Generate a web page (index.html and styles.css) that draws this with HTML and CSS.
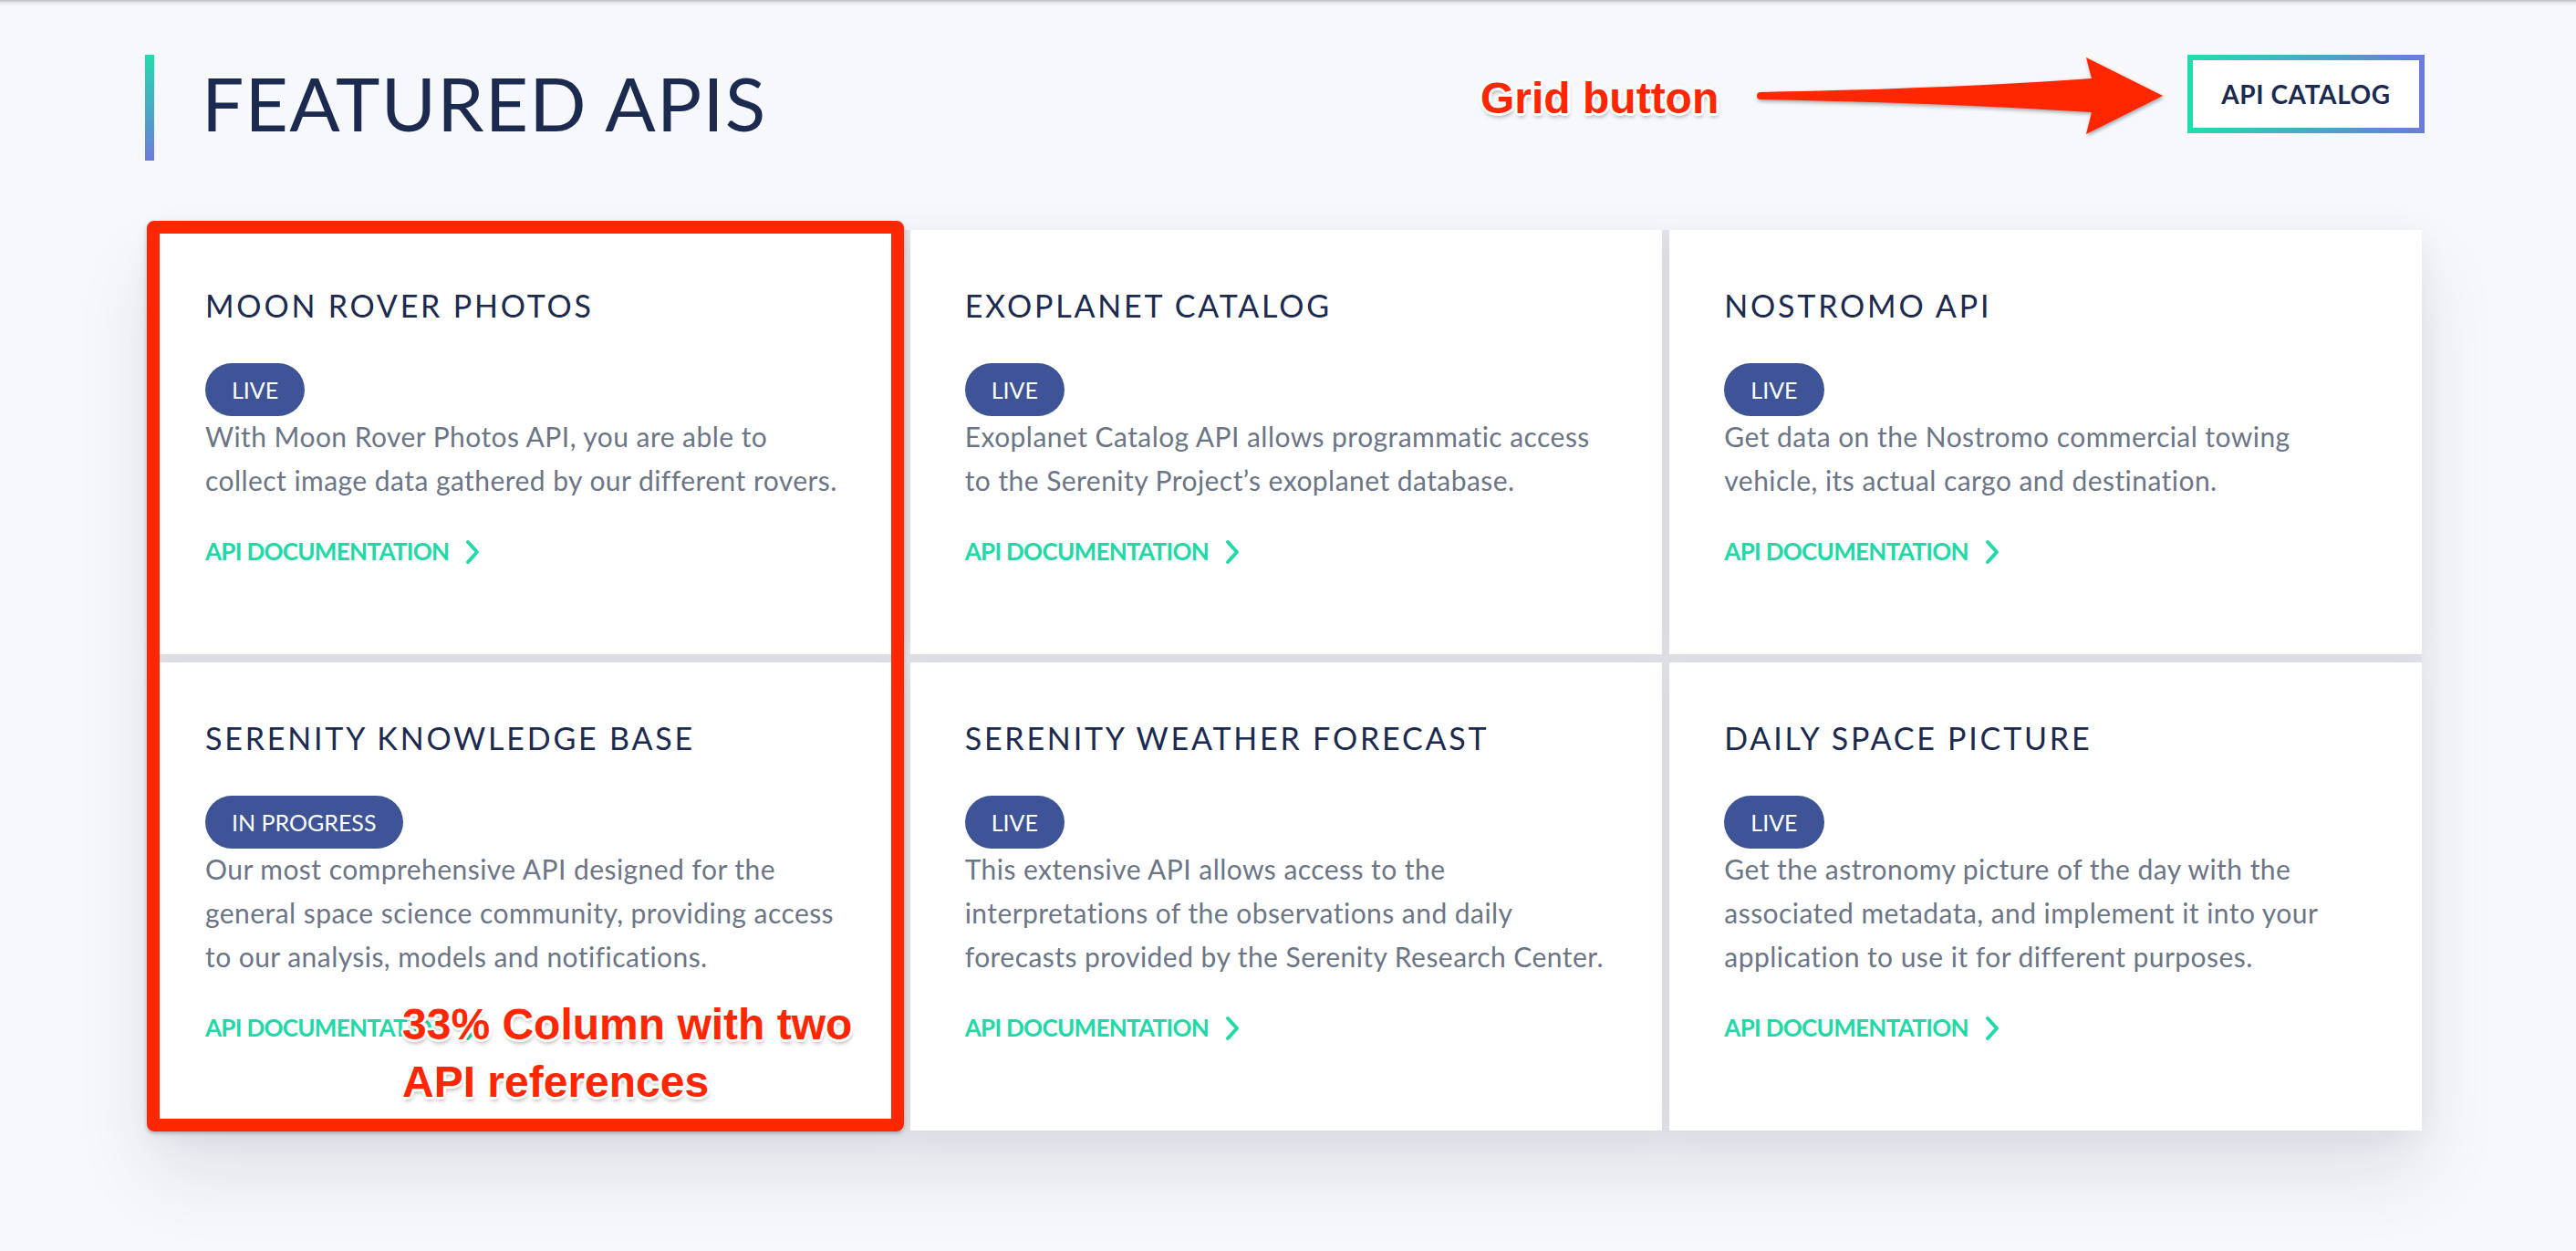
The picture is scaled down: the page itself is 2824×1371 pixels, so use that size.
FILE: index.html
```html
<!DOCTYPE html>
<html lang="en">
<head>
<meta charset="utf-8">
<title>Featured APIs</title>
<link rel="stylesheet" href="styles.css">
</head>
<body>
<div class="page">
  <header class="header">
    <div class="title-wrap">
      <span class="accent"></span>
      <h1 class="title">FEATURED APIS</h1>
    </div>
    <a class="catalog-btn" href="#">API CATALOG</a>
  </header>

  <section class="grid">
    <article class="card">
      <h2 class="card-title">MOON ROVER PHOTOS</h2>
      <span class="badge">LIVE</span>
      <p class="desc">With Moon Rover Photos API, you are able to<br>collect image data gathered by our different rovers.</p>
      <a class="doc-link" href="#">API DOCUMENTATION<svg class="chev" viewBox="0 0 18 28" width="18" height="28"><path d="M4 3 L14 14 L4 25"/></svg></a>
    </article>
    <article class="card">
      <h2 class="card-title">EXOPLANET CATALOG</h2>
      <span class="badge">LIVE</span>
      <p class="desc">Exoplanet Catalog API allows programmatic access<br>to the Serenity Project’s exoplanet database.</p>
      <a class="doc-link" href="#">API DOCUMENTATION<svg class="chev" viewBox="0 0 18 28" width="18" height="28"><path d="M4 3 L14 14 L4 25"/></svg></a>
    </article>
    <article class="card">
      <h2 class="card-title">NOSTROMO API</h2>
      <span class="badge">LIVE</span>
      <p class="desc">Get data on the Nostromo commercial towing<br>vehicle, its actual cargo and destination.</p>
      <a class="doc-link" href="#">API DOCUMENTATION<svg class="chev" viewBox="0 0 18 28" width="18" height="28"><path d="M4 3 L14 14 L4 25"/></svg></a>
    </article>
    <article class="card">
      <h2 class="card-title">SERENITY KNOWLEDGE BASE</h2>
      <span class="badge">IN PROGRESS</span>
      <p class="desc">Our most comprehensive API designed for the<br>general space science community, providing access<br>to our analysis, models and notifications.</p>
      <a class="doc-link" href="#">API DOCUMENTATION<svg class="chev" viewBox="0 0 18 28" width="18" height="28"><path d="M4 3 L14 14 L4 25"/></svg></a>
    </article>
    <article class="card">
      <h2 class="card-title">SERENITY WEATHER FORECAST</h2>
      <span class="badge">LIVE</span>
      <p class="desc">This extensive API allows access to the<br>interpretations of the observations and daily<br>forecasts provided by the Serenity Research Center.</p>
      <a class="doc-link" href="#">API DOCUMENTATION<svg class="chev" viewBox="0 0 18 28" width="18" height="28"><path d="M4 3 L14 14 L4 25"/></svg></a>
    </article>
    <article class="card">
      <h2 class="card-title">DAILY SPACE PICTURE</h2>
      <span class="badge">LIVE</span>
      <p class="desc">Get the astronomy picture of the day with the<br>associated metadata, and implement it into your<br>application to use it for different purposes.</p>
      <a class="doc-link" href="#">API DOCUMENTATION<svg class="chev" viewBox="0 0 18 28" width="18" height="28"><path d="M4 3 L14 14 L4 25"/></svg></a>
    </article>
  </section>
</div>

<!-- annotations -->
<div class="note note-grid">Grid button</div>
<svg class="note-arrow" viewBox="0 0 500 130" width="500" height="130">
  <path d="M30 61 Q 240 57 393 46 L 387 23 L 471 65 L 387 107 L 393 83 Q 240 73 30 69 A 4 4 0 0 1 30 61 Z"/>
</svg>
<div class="note-box"></div>
<div class="note note-col">33% Column with two<br>API references</div>
</body>
</html>
```

FILE: styles.css
```css
html, body {
  margin: 0;
  padding: 0;
}

body {
  min-height: 1371px;
  background: linear-gradient(to bottom, #b9babf 0px, #e9eaee 3px, #f7f8fb 7px, #f7f8fb 100%);
  font-family: "Lato", "Open Sans", sans-serif;
  color: #1b2a4e;
  overflow: hidden;
}

.page {
  padding: 60px 166px 0 159px;
}

.header {
  display: flex;
  justify-content: space-between;
  align-items: flex-start;
}

.title-wrap {
  display: flex;
  align-items: flex-start;
}

.accent {
  display: block;
  width: 10px;
  height: 116px;
  background: linear-gradient(to bottom, #22dcae, #6c7bd9);
}

.title {
  margin: 0 0 0 52px;
  font-size: 82px;
  line-height: 104px;
  font-weight: 400;
  letter-spacing: 1.2px;
  color: #1b2a4e;
}

.catalog-btn {
  display: flex;
  align-items: center;
  justify-content: center;
  box-sizing: border-box;
  width: 260px;
  height: 86px;
  border: 6px solid transparent;
  border-image: linear-gradient(90deg, #22dcae, #6c7bd9) 1;
  background: #ffffff;
  color: #1b2a4e;
  font-size: 28px;
  font-weight: 700;
  letter-spacing: 0.6px;
  text-decoration: none;
}

.grid {
  display: grid;
  grid-template-columns: repeat(3, 1fr);
  column-gap: 8px;
  row-gap: 9px;
  margin: 76px 3px 0 6px;
  background: #e4e5ea;
  box-shadow: 0 45px 80px rgba(30, 40, 70, 0.11);
}

.card {
  background: #ffffff;
  padding: 62px 61px 98px;
  box-shadow: 0 6px 30px rgba(30, 40, 70, 0.05);
}

.card-title {
  margin: 0 0 43px -1px;
  font-size: 34px;
  line-height: 41px;
  font-weight: 400;
  letter-spacing: 2.8px;
  color: #1b2a4e;
}

.badge {
  display: inline-block;
  margin-left: -1px;
  padding: 14px 29px;
  border-radius: 29px;
  background: #3e5496;
  color: #ffffff;
  font-size: 25px;
  line-height: 30px;
  font-weight: 400;
}

.desc {
  margin: -2px 0 0 -1px;
  font-size: 30px;
  line-height: 48px;
  letter-spacing: 0.45px;
  color: #6c7586;
}

.doc-link {
  display: inline-flex;
  align-items: center;
  margin: 39px 0 0 -1px;
  font-size: 26px;
  line-height: 30px;
  font-weight: 700;
  letter-spacing: -0.7px;
  color: #22d8a6;
  text-decoration: none;
}

.chev {
  margin-left: 17px;
  margin-top: 2px;
  fill: none;
  stroke: #22d8a6;
  stroke-width: 4;
  stroke-linecap: round;
  stroke-linejoin: round;
}

/* annotation layer */
.note {
  position: absolute;
  font-family: "Liberation Sans", Arial, sans-serif;
  font-weight: 700;
  font-size: 48px;
  line-height: 63px;
  color: #ff2600;
  white-space: nowrap;
  text-shadow:
    -3px 0 0 #fff, 3px 0 0 #fff, 0 -3px 0 #fff, 0 3px 0 #fff,
    -2px -2px 0 #fff, 2px -2px 0 #fff, -2px 2px 0 #fff, 2px 2px 0 #fff,
    1px 4px 5px rgba(0, 0, 0, 0.35);
}

.note-grid {
  left: 1623px;
  top: 76px;
}

.note-col {
  left: 441px;
  top: 1091px;
}

.note-arrow {
  position: absolute;
  left: 1900px;
  top: 40px;
  fill: #ff2600;
  filter: drop-shadow(1px 2px 2px rgba(0, 0, 0, 0.35));
}

.note-box {
  position: absolute;
  left: 161px;
  top: 242px;
  width: 830px;
  height: 998px;
  box-sizing: border-box;
  border: 14px solid #ff2600;
  border-radius: 8px;
  box-shadow: 0 2px 4px rgba(0, 0, 0, 0.25);
}
```
